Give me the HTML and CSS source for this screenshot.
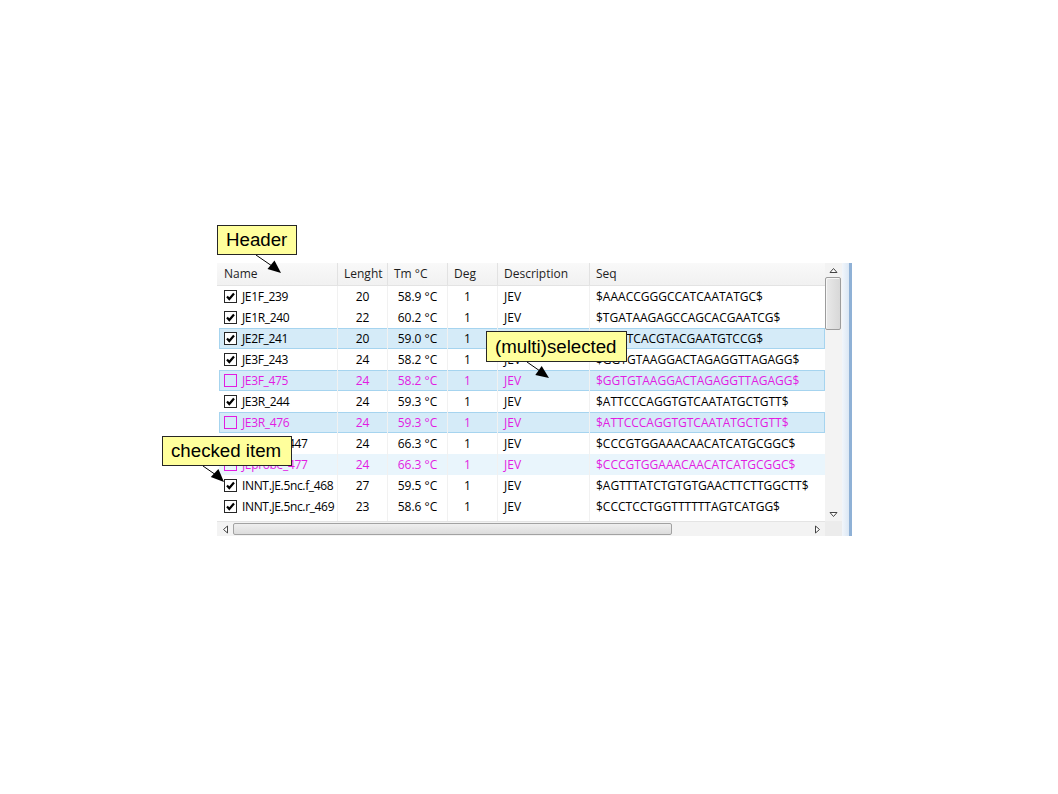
FILE: index.html
```html
<!DOCTYPE html>
<html>
<head>
<meta charset="utf-8">
<link rel="stylesheet" href="styles.css">
</head>
<body>
<div class="page">
  <div class="widget">
    <div class="main">
      <div class="header grid">
        <div class="hcell first">Name</div>
        <div class="hcell">Lenght</div>
        <div class="hcell">Tm °C</div>
        <div class="hcell">Deg</div>
        <div class="hcell">Description</div>
        <div class="hcell last">Seq</div>
      </div>
      <div class="rows">
        <div class="row grid">
          <div class="cell name"><span class="cb"><svg viewBox="0 0 11 11"><path d="M2 5.5l2.3 2.5 4.7-5.5"/></svg></span>JE1F_239</div>
          <div class="cell num">20</div><div class="cell num">58.9 °C</div><div class="cell deg">1</div><div class="cell">JEV</div><div class="cell seq">$AAACCGGGCCATCAATATGC$</div>
        </div>
        <div class="row grid">
          <div class="cell name"><span class="cb"><svg viewBox="0 0 11 11"><path d="M2 5.5l2.3 2.5 4.7-5.5"/></svg></span>JE1R_240</div>
          <div class="cell num">22</div><div class="cell num">60.2 °C</div><div class="cell deg">1</div><div class="cell">JEV</div><div class="cell seq">$TGATAAGAGCCAGCACGAATCG$</div>
        </div>
        <div class="row grid sel">
          <div class="cell name"><span class="cb"><svg viewBox="0 0 11 11"><path d="M2 5.5l2.3 2.5 4.7-5.5"/></svg></span>JE2F_241</div>
          <div class="cell num">20</div><div class="cell num">59.0 °C</div><div class="cell deg">1</div><div class="cell">JEV</div><div class="cell seq">$GCATCACGTACGAATGTCCG$</div>
        </div>
        <div class="row grid">
          <div class="cell name"><span class="cb"><svg viewBox="0 0 11 11"><path d="M2 5.5l2.3 2.5 4.7-5.5"/></svg></span>JE3F_243</div>
          <div class="cell num">24</div><div class="cell num">58.2 °C</div><div class="cell deg">1</div><div class="cell">JEV</div><div class="cell seq">$GGTGTAAGGACTAGAGGTTAGAGG$</div>
        </div>
        <div class="row grid sel pink">
          <div class="cell name"><span class="cb off"></span>JE3F_475</div>
          <div class="cell num">24</div><div class="cell num">58.2 °C</div><div class="cell deg">1</div><div class="cell">JEV</div><div class="cell seq">$GGTGTAAGGACTAGAGGTTAGAGG$</div>
        </div>
        <div class="row grid">
          <div class="cell name"><span class="cb"><svg viewBox="0 0 11 11"><path d="M2 5.5l2.3 2.5 4.7-5.5"/></svg></span>JE3R_244</div>
          <div class="cell num">24</div><div class="cell num">59.3 °C</div><div class="cell deg">1</div><div class="cell">JEV</div><div class="cell seq">$ATTCCCAGGTGTCAATATGCTGTT$</div>
        </div>
        <div class="row grid sel pink">
          <div class="cell name"><span class="cb off"></span>JE3R_476</div>
          <div class="cell num">24</div><div class="cell num">59.3 °C</div><div class="cell deg">1</div><div class="cell">JEV</div><div class="cell seq">$ATTCCCAGGTGTCAATATGCTGTT$</div>
        </div>
        <div class="row grid">
          <div class="cell name"><span class="cb"><svg viewBox="0 0 11 11"><path d="M2 5.5l2.3 2.5 4.7-5.5"/></svg></span>JEprobe_447</div>
          <div class="cell num">24</div><div class="cell num">66.3 °C</div><div class="cell deg">1</div><div class="cell">JEV</div><div class="cell seq">$CCCGTGGAAACAACATCATGCGGC$</div>
        </div>
        <div class="row grid hover pink">
          <div class="cell name"><span class="cb off"></span>JEprobe_477</div>
          <div class="cell num">24</div><div class="cell num">66.3 °C</div><div class="cell deg">1</div><div class="cell">JEV</div><div class="cell seq">$CCCGTGGAAACAACATCATGCGGC$</div>
        </div>
        <div class="row grid">
          <div class="cell name"><span class="cb"><svg viewBox="0 0 11 11"><path d="M2 5.5l2.3 2.5 4.7-5.5"/></svg></span>INNT.JE.5nc.f_468</div>
          <div class="cell num">27</div><div class="cell num">59.5 °C</div><div class="cell deg">1</div><div class="cell">JEV</div><div class="cell seq">$AGTTTATCTGTGTGAACTTCTTGGCTT$</div>
        </div>
        <div class="row grid">
          <div class="cell name"><span class="cb"><svg viewBox="0 0 11 11"><path d="M2 5.5l2.3 2.5 4.7-5.5"/></svg></span>INNT.JE.5nc.r_469</div>
          <div class="cell num">23</div><div class="cell num">58.6 °C</div><div class="cell deg">1</div><div class="cell">JEV</div><div class="cell seq">$CCCTCCTGGTTTTTTAGTCATGG$</div>
        </div>
        <div class="row grid">
          <div class="cell name"><span class="cb"></span></div>
          <div class="cell num"></div><div class="cell num"></div><div class="cell deg"></div><div class="cell"></div><div class="cell seq"></div>
        </div>
      </div>
      <div class="hscroll">
        <div class="hbtn"><svg viewBox="0 0 7 9"><path d="M5.5 1 L1.5 4.5 L5.5 8 Z"/></svg></div>
        <div class="htrack"><div class="hthumb"></div></div>
        <div class="hbtn"><svg viewBox="0 0 7 9"><path d="M1.5 1 L5.5 4.5 L1.5 8 Z"/></svg></div>
      </div>
    </div>
    <div class="vcol">
      <div class="vbtn up"><svg viewBox="0 0 9 7"><path d="M1 5.5 L4.5 1.5 L8 5.5 Z"/></svg></div>
      <div class="vtrack"><div class="vthumb"></div></div>
      <div class="vbtn down"><svg viewBox="0 0 9 7"><path d="M1 1.5 L4.5 5.5 L8 1.5 Z"/></svg></div>
      <div class="corner"></div>
    </div>
    <div class="frame"></div>
  </div>

  <div class="callout c-header">Header</div>
  <div class="callout c-multi">(multi)selected</div>
  <div class="callout c-checked">checked item</div>

  <svg class="arrows" width="1058" height="794" viewBox="0 0 1058 794">
    <line x1="256" y1="255" x2="272" y2="266"/>
    <polygon points="281,273 267.5,268.9 274.5,260.4"/>
    <line x1="527" y1="362" x2="540" y2="371"/>
    <polygon points="549,378 535.3,374.9 541.7,365.9"/>
    <line x1="203" y1="466" x2="216" y2="475"/>
    <polygon points="224,482 210.8,477 218.4,469"/>
  </svg>
</div>
</body>
</html>
```

FILE: styles.css
```css
html, body {
  margin: 0;
  padding: 0;
  background: #ffffff;
}

.page {
  position: relative;
  width: 1058px;
  height: 794px;
  padding: 263px 0 0 217px;
  box-sizing: border-box;
  font-family: "Open Sans", "Noto Sans", sans-serif;
  font-size: 12px;
  color: #000;
}

.widget {
  display: flex;
  width: 635px;
  height: 273px;
  background: #fff;
}

.main {
  width: 608px;
  display: flex;
  flex-direction: column;
}

.grid {
  display: grid;
  grid-template-columns: 121px 50px 60px 50px 92px 235px;
}

.header {
  height: 23px;
  box-sizing: border-box;
  background: linear-gradient(#f9f9f9, #f1f1f1);
  border-bottom: 1px solid #e3e3e3;
  color: #1e1e1e;
}

.hcell {
  padding-left: 6px;
  line-height: 21px;
  border-right: 1px solid #e2e2e2;
  white-space: nowrap;
  overflow: hidden;
}

.hcell.first {
  padding-left: 7px;
}

.hcell.last {
  border-right: none;
}

.rows {
  height: 235px;
  overflow: hidden;
}

.row {
  position: relative;
  height: 21px;
  z-index: 0;
}

.row.sel::before,
.row.hover::before {
  content: "";
  position: absolute;
  top: 0;
  bottom: 0;
  left: 2px;
  right: 0;
  z-index: -1;
  box-sizing: border-box;
}

.row.sel::before {
  background: #d5ebf8;
  border: 1px solid #a6d4ef;
}

.row.hover::before {
  background: #e9f5fc;
}

.row.pink {
  color: #e21ce2;
}

.cell {
  line-height: 21px;
  padding-left: 6px;
  border-right: 1px solid #f1f1f1;
  white-space: nowrap;
  overflow: hidden;
}

.cell.name {
  padding-left: 7px;
  display: flex;
  align-items: center;
  gap: 5px;
  letter-spacing: -0.35px;
}

.cell.num {
  padding-left: 0;
  text-align: center;
}

.cell.deg {
  padding-left: 0;
  padding-right: 10px;
  text-align: center;
}

.cell.seq {
  border-right: none;
}

.cb {
  flex: none;
  width: 13px;
  height: 13px;
  box-sizing: border-box;
  border: 1px solid #262626;
  background: #fff;
  display: flex;
  align-items: center;
  justify-content: center;
}

.cb svg {
  width: 11px;
  height: 11px;
  display: block;
}

.cb svg path {
  fill: none;
  stroke: #000;
  stroke-width: 2.2;
}

.cb.off {
  border-color: #e21ce2;
  background: transparent;
}

.hscroll {
  height: 15px;
  display: flex;
  background: #f3f3f3;
  border-top: 1px solid #e4e4e4;
  box-sizing: border-box;
}

.hbtn {
  width: 16px;
  display: flex;
  align-items: center;
  justify-content: center;
}

.hbtn svg {
  width: 7px;
  height: 9px;
}

.hbtn svg path,
.vbtn svg path {
  fill: #fff;
  stroke: #444;
  stroke-width: 1;
  stroke-linejoin: miter;
}

.htrack {
  flex: 1;
  padding-top: 1px;
}

.hthumb {
  width: 439px;
  height: 12px;
  box-sizing: border-box;
  border: 1px solid #a2a2a2;
  border-radius: 2px;
  background: linear-gradient(#efefef, #dcdcdc);
}

.vcol {
  width: 17px;
  display: flex;
  flex-direction: column;
  background: #f3f3f3;
}

.vbtn {
  height: 14px;
  display: flex;
  align-items: center;
  justify-content: center;
  padding-right: 1px;
}

.vbtn svg {
  width: 9px;
  height: 7px;
}

.vtrack {
  flex: 1;
}

.vthumb {
  width: 16px;
  height: 53px;
  box-sizing: border-box;
  border: 1px solid #9c9c9c;
  border-radius: 2px;
  background: linear-gradient(90deg, #e9e9e9, #d8d8d8);
  box-shadow: inset 1px 1px 0 #f7f7f7;
}

.corner {
  height: 15px;
  background: #ececec;
}

.frame {
  width: 10px;
  box-sizing: border-box;
  background: linear-gradient(90deg, #f2f6fb, #dbe7f4);
  border-right: 3px solid #8fb1d6;
}

.callout {
  position: absolute;
  box-sizing: border-box;
  height: 30px;
  background: #ffff9c;
  border: 1px solid #262626;
  font-family: "Liberation Sans", Arial, sans-serif;
  font-size: 18.7px;
  line-height: 28px;
  color: #000;
  padding-left: 8px;
  white-space: nowrap;
}

.c-header {
  left: 217px;
  top: 225px;
  width: 80px;
}

.c-multi {
  left: 486px;
  top: 331px;
  width: 141px;
  height: 31px;
  line-height: 29px;
}

.c-checked {
  left: 162px;
  top: 436px;
  width: 130px;
}

.arrows {
  position: absolute;
  left: 0;
  top: 0;
  pointer-events: none;
}

.arrows line {
  stroke: #000;
  stroke-width: 1;
}

.arrows polygon {
  fill: #000;
}
```
